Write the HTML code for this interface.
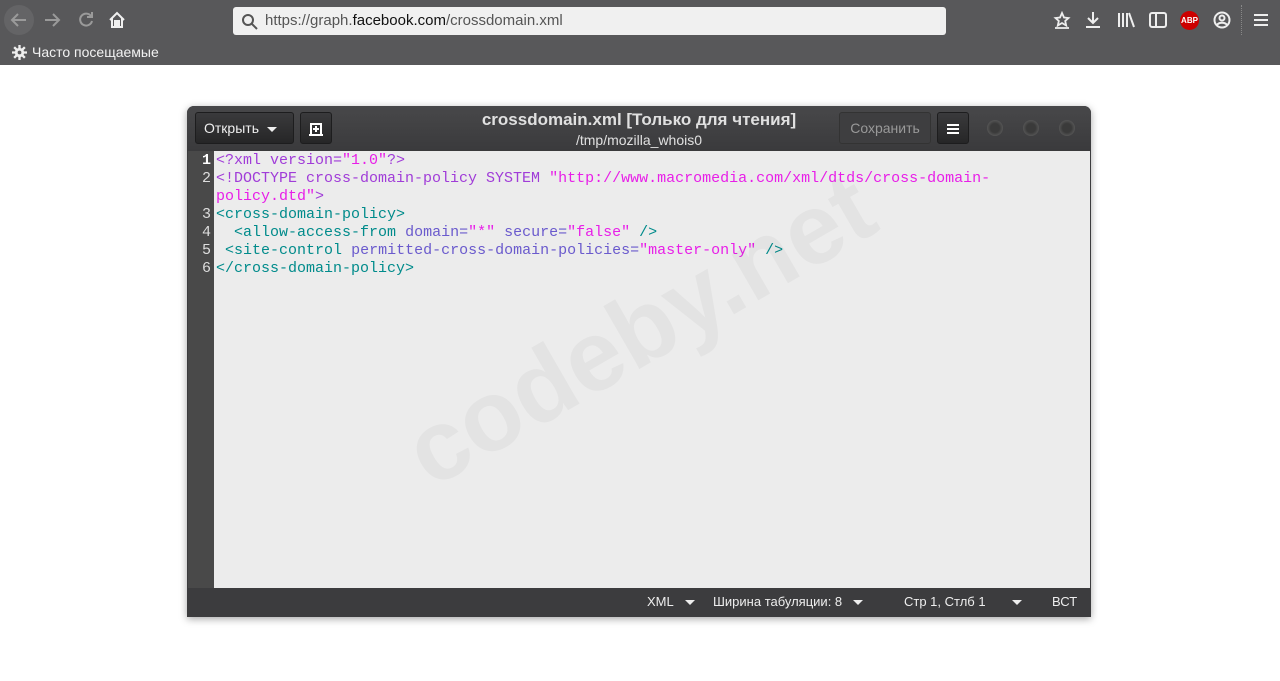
<!DOCTYPE html>
<html><head><meta charset="utf-8">
<style>
*{margin:0;padding:0;box-sizing:border-box}
body{width:1280px;height:681px;background:#fff;font-family:"Liberation Sans",sans-serif;position:relative;overflow:hidden}
.tb{position:absolute;left:0;top:0;width:1280px;height:40px;background:#58585a}
.bm{position:absolute;left:0;top:40px;width:1280px;height:25px;background:#58585a;color:#f2f2f2;font-size:14px}
.url{position:absolute;left:233px;top:7px;width:713px;height:28px;background:#f0f0f0;border-radius:3px;font-size:15px;color:#555;line-height:28px;padding-left:32px}
.url b{font-weight:normal;color:#111}
.ic{position:absolute;color:#eee}
.win{position:absolute;left:187px;top:106px;width:904px;height:511px;background:#3c3c3e;border-radius:7px 7px 0 0;box-shadow:0 2px 8px rgba(0,0,0,.35)}
.hdr{position:absolute;left:0;top:0;width:904px;height:45px;background:linear-gradient(#48484a,#3a3a3c);border-radius:7px 7px 0 0}
.btn{position:absolute;top:6px;height:32px;border-radius:3px;background:linear-gradient(#3a3a3c,#262627);border:1px solid #1d1d1e;color:#eee;font-size:14px;line-height:30px}
.title{position:absolute;left:0;width:904px;text-align:center;color:#e0e0e0}
.gut{position:absolute;left:1px;top:45px;width:26px;height:437px;background:#494949;color:#ddd;font-family:"Liberation Mono",monospace;font-size:15px;line-height:18px;text-align:right;padding-right:3px;padding-top:1px;white-space:pre}
.ed{position:absolute;left:27px;top:45px;width:876px;height:437px;background:#ececec;font-family:"Liberation Mono",monospace;font-size:15px;line-height:18px;padding-left:2px;padding-top:1px;white-space:pre;overflow:hidden}
.clip{position:absolute;left:27px;top:45px;width:876px;height:437px;overflow:hidden}
.sb{position:absolute;left:0;top:482px;width:904px;height:29px;background:#3c3c3e;color:#eee;font-size:13px;line-height:28px}
.p{color:#a03cd8}.t{color:#008b8b}.a{color:#6a5acd}.s{color:#e81ee8}
.wm{position:absolute;left:426px;top:179px;font-size:100px;font-weight:bold;color:rgba(0,0,0,.035);transform:translate(-50%,-50%) rotate(-30deg);white-space:nowrap;font-family:"Liberation Sans",sans-serif}
.dot{position:absolute;top:14px;width:16px;height:16px;border-radius:50%;background:radial-gradient(#3a3a3a 40%,#555 70%,#2a2a2a)}
.tri{display:inline-block;width:0;height:0;border-left:5px solid transparent;border-right:5px solid transparent;border-top:5px solid #eee;vertical-align:middle}
</style></head><body>
<div class="tb">
 <div style="position:absolute;left:4px;top:5px;width:30px;height:30px;border-radius:50%;background:#646466"></div>
 <svg class="ic" style="left:8px;top:9px" width="22" height="22" viewBox="0 0 22 22" fill="none" stroke="#9a9a9a" stroke-width="2"><path d="M18 11H4M10 5l-6 6 6 6"/></svg>
 <svg class="ic" style="left:42px;top:9px" width="22" height="22" viewBox="0 0 22 22" fill="none" stroke="#9a9a9a" stroke-width="2"><path d="M3 11h14M11 5l6 6-6 6"/></svg>
 <svg class="ic" style="left:76px;top:10px" width="20" height="20" viewBox="0 0 20 20" fill="none" stroke="#9a9a9a" stroke-width="2"><path d="M15 6a6 6 0 1 0 1 5"/><path d="M16 2v5h-5"/></svg>
 <svg class="ic" style="left:107px;top:10px" width="20" height="20" viewBox="0 0 20 20" fill="none" stroke="#f0f0f0" stroke-width="2"><path d="M3 10l7-7 7 7M5 8v9h10V8"/><rect x="8" y="11" width="4" height="6" fill="#f0f0f0"/></svg>
 <div class="url"><svg style="position:absolute;left:8px;top:6px" width="17" height="17" viewBox="0 0 17 17" fill="none" stroke="#555" stroke-width="2"><circle cx="7" cy="7" r="5"/><path d="M11 11l5 5"/></svg>https://graph.<b>facebook.com</b>/crossdomain.xml</div>
 <svg class="ic" style="left:1053px;top:11px" width="18" height="18" viewBox="0 0 18 18" fill="none" stroke="#eee" stroke-width="1.8"><path d="M9 2l2 4.5 4.5.5-3.3 3 1 4.5L9 12l-4.2 2.5 1-4.5-3.3-3 4.5-.5z"/><path d="M2 17h14"/></svg>
 <svg class="ic" style="left:1084px;top:11px" width="18" height="18" viewBox="0 0 18 18" fill="none" stroke="#eee" stroke-width="2"><path d="M9 1v11M4 7l5 5 5-5M2 16h14"/></svg>
 <svg class="ic" style="left:1117px;top:11px" width="18" height="18" viewBox="0 0 18 18" fill="none" stroke="#eee" stroke-width="2"><path d="M2 2v14M6 2v14M10 2v14M12 2l5 14"/></svg>
 <svg class="ic" style="left:1149px;top:11px" width="18" height="18" viewBox="0 0 18 18" fill="none" stroke="#eee" stroke-width="2"><rect x="1" y="2" width="16" height="14" rx="2"/><path d="M7 2v14"/></svg>
 <div style="position:absolute;left:1180px;top:11px;width:19px;height:19px;border-radius:50%;background:#c00;color:#fff;font-size:8px;font-weight:bold;line-height:19px;text-align:center">ABP</div>
 <svg class="ic" style="left:1213px;top:11px" width="18" height="18" viewBox="0 0 18 18" fill="none" stroke="#eee" stroke-width="2"><circle cx="9" cy="9" r="7.5"/><circle cx="9" cy="7" r="2.5"/><path d="M4 14c2-3 8-3 10 0"/></svg>
 <div style="position:absolute;left:1241px;top:5px;width:1px;height:30px;border-left:1px dotted #888"></div>
 <svg class="ic" style="left:1253px;top:12px" width="16" height="16" viewBox="0 0 16 16" stroke="#eee" stroke-width="2"><path d="M1 3h14M1 8h14M1 13h14"/></svg>
</div>
<div class="bm"><svg style="position:absolute;left:12px;top:5px" width="15" height="15" viewBox="0 0 16 16"><circle cx="8" cy="8" r="5" fill="#eee"/><circle cx="8" cy="8" r="2" fill="#58585a"/><path d="M8 0v16M0 8h16M2.3 2.3l11.4 11.4M13.7 2.3L2.3 13.7" stroke="#eee" stroke-width="2.5"/><circle cx="8" cy="8" r="2" fill="#58585a"/></svg><span style="position:absolute;left:32px;top:4px">Часто посещаемые</span></div>

<div class="win">
 <div class="hdr">
  <div class="btn" style="left:8px;width:99px;padding-left:8px">Открыть&nbsp; <span class="tri"></span></div>
  <div class="btn" style="left:113px;width:32px;text-align:center"><svg width="16" height="16" viewBox="0 0 16 16" fill="none" stroke="#fff" stroke-width="2" style="vertical-align:middle"><path d="M3 14V3h10v11M1 14h14M8 5v6M5 8h6"/></svg></div>
  <div class="title" style="top:4px;font-size:17px;font-weight:bold">crossdomain.xml [Только для чтения]</div>
  <div class="title" style="top:26px;font-size:14px">/tmp/mozilla_whois0</div>
  <div class="btn" style="left:652px;width:92px;text-align:center;color:#999;background:#3e3e40;border-color:#333">Сохранить</div>
  <div class="btn" style="left:750px;width:32px;text-align:center"><svg width="12" height="12" viewBox="0 0 12 12" stroke="#fff" stroke-width="2" style="vertical-align:middle"><path d="M0 2h12M0 6h12M0 10h12"/></svg></div>
  <div class="dot" style="left:800px"></div><div class="dot" style="left:836px"></div><div class="dot" style="left:872px"></div>
 </div>
 <div class="gut"><b style="color:#fff">1</b>
2

3
4
5
6</div>
 <div class="ed"><span class="p">&lt;?xml version=</span><span class="s">"1.0"</span><span class="p">?&gt;</span>
<span class="p">&lt;!DOCTYPE cross-domain-policy SYSTEM </span><span class="s">"http://www.macromedia.com/xml/dtds/cross-domain-
policy.dtd"</span><span class="p">&gt;</span>
<span class="t">&lt;cross-domain-policy&gt;</span>
  <span class="t">&lt;allow-access-from</span> <span class="a">domain=</span><span class="s">"*"</span> <span class="a">secure=</span><span class="s">"false"</span> <span class="t">/&gt;</span>
 <span class="t">&lt;site-control</span> <span class="a">permitted-cross-domain-policies=</span><span class="s">"master-only"</span> <span class="t">/&gt;</span>
<span class="t">&lt;/cross-domain-policy&gt;</span></div>
 <div class="clip"><div class="wm">codeby.net</div></div>
 <div class="sb">
  <span style="position:absolute;left:460px">XML&nbsp;&nbsp; <span class="tri"></span></span>
  <span style="position:absolute;left:526px">Ширина табуляции: 8&nbsp;&nbsp; <span class="tri"></span></span>
  <span style="position:absolute;left:717px">Стр 1, Стлб 1</span>
  <span style="position:absolute;left:825px"><span class="tri"></span></span>
  <span style="position:absolute;left:865px">ВСТ</span>
 </div>
</div>
</body></html>
